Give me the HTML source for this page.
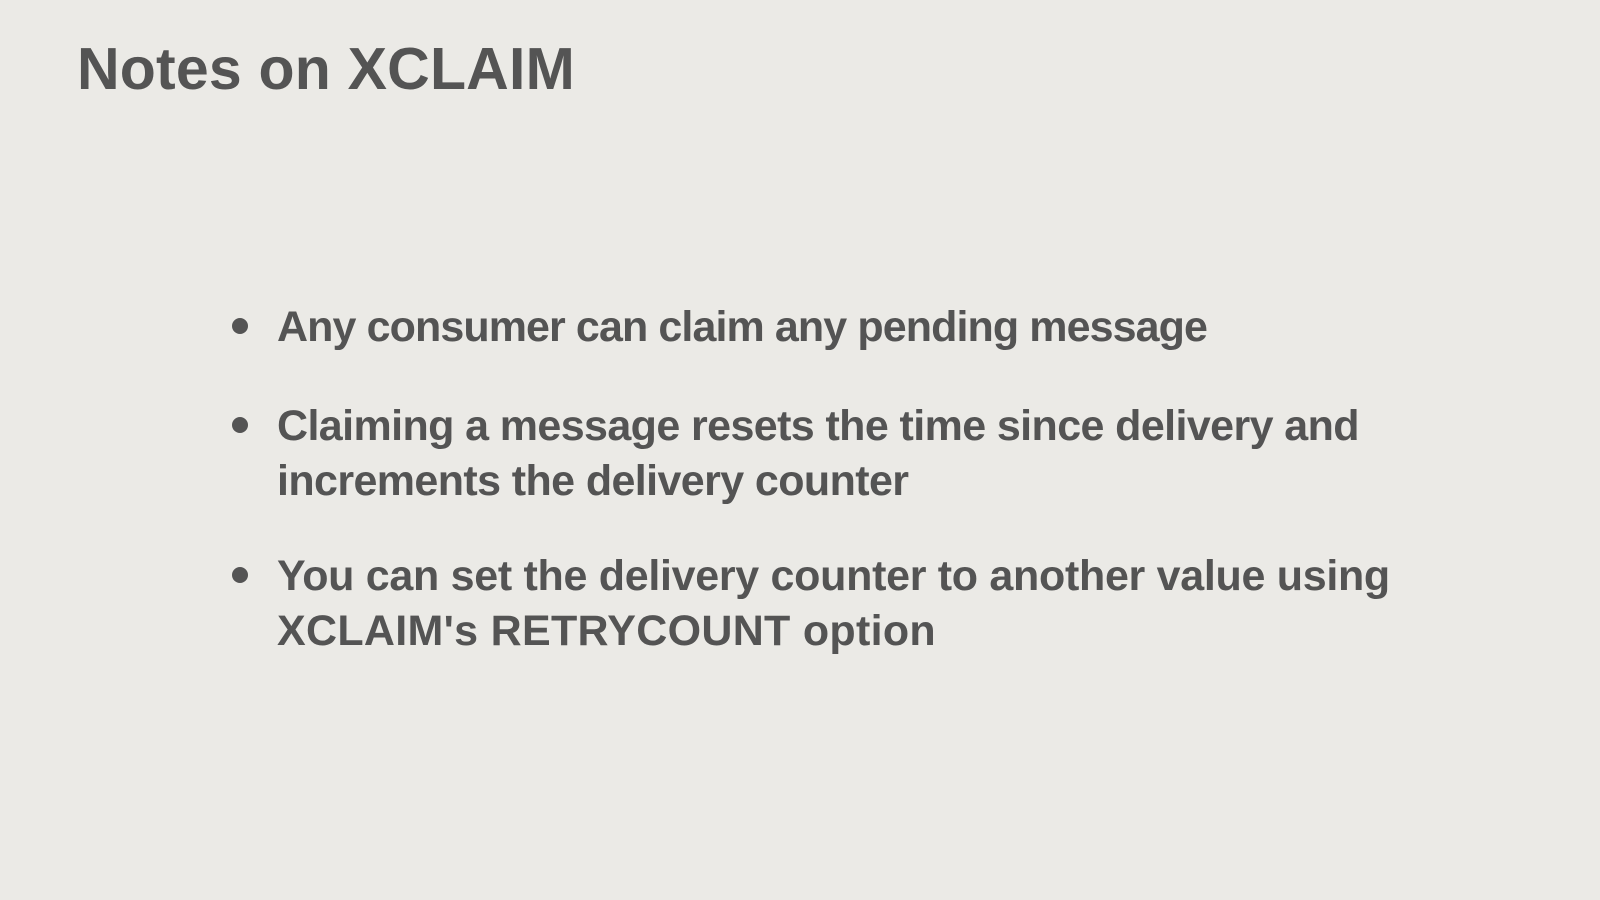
<!DOCTYPE html>
<html><head><meta charset="utf-8"><style>
html,body{margin:0;padding:0}
body{width:1600px;height:900px;background:#ebeae6;position:relative;overflow:hidden;font-family:"Liberation Sans",sans-serif;font-weight:bold;color:#545454}
.l{position:absolute;line-height:1;white-space:nowrap}
.t{font-size:59px;left:77px;top:40px;letter-spacing:0.2px}
.b{font-size:43px;left:277px;letter-spacing:-0.6px}
.d{position:absolute;width:16px;height:16px;border-radius:50%;background:#545454;left:232px}
</style></head><body>
<div class="l t">Notes on XCLAIM</div>
<div class="d" style="top:318px"></div>
<div class="l b" style="top:306px;letter-spacing:-0.9px">Any consumer can claim any pending message</div>
<div class="d" style="top:417px"></div>
<div class="l b" style="top:405px">Claiming a message resets the time since delivery and</div>
<div class="l b" style="top:460px">increments the delivery counter</div>
<div class="d" style="top:567px"></div>
<div class="l b" style="top:555px;letter-spacing:-0.3px">You can set the delivery counter to another value using</div>
<div class="l b" style="top:610px;letter-spacing:0.3px">XCLAIM's RETRYCOUNT option</div>
</body></html>
